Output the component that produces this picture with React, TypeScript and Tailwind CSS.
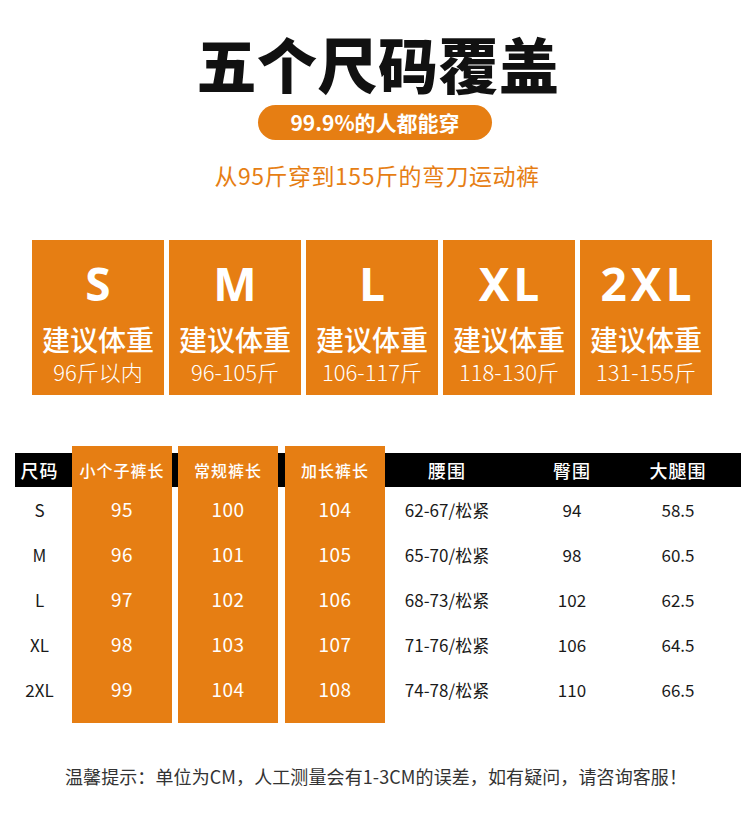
import React from "react";

const FONT = { fontFamily: '"Noto Sans CJK SC", "Noto Sans", sans-serif' };

const cards = [
  { s: "S", w: "96斤以内" },
  { s: "M", w: "96-105斤" },
  { s: "L", w: "106-117斤" },
  { s: "XL", w: "118-130斤" },
  { s: "2XL", w: "131-155斤" },
];

const sizes = ["S", "M", "L", "XL", "2XL"];
const short = ["95", "96", "97", "98", "99"];
const regular = ["100", "101", "102", "103", "104"];
const long = ["104", "105", "106", "107", "108"];
const waist = ["62-67/松紧", "65-70/松紧", "68-73/松紧", "71-76/松紧", "74-78/松紧"];
const hip = ["94", "98", "102", "106", "110"];
const thigh = ["58.5", "60.5", "62.5", "64.5", "66.5"];

function OrangeCol({ title, values }: { title: string; values: string[] }) {
  return (
    <div className="w-[100px] bg-[#e67e13] pt-[7px] pb-[11px] flex flex-col">
      <div className="h-[34px] flex items-center justify-center text-white text-[16px] font-medium tracking-[1px]">
        {title}
      </div>
      {values.map((v, i) => (
        <div key={i} className="h-[45px] flex items-center justify-center text-white text-[19px] font-normal tracking-[0.5px]">
          {v}
        </div>
      ))}
    </div>
  );
}

function Spacer({ w }: { w: string }) {
  return (
    <div className={`${w} flex flex-col pt-[7px]`}>
      <div className="h-[34px] bg-black" />
    </div>
  );
}

function PlainCol({
  title,
  values,
  cls,
  inner,
}: {
  title: string;
  values: string[];
  cls: string;
  inner?: string;
}) {
  return (
    <div className={`${cls} flex flex-col pt-[7px]`}>
      <div className={`h-[34px] bg-black flex items-center justify-center text-white text-[18px] font-medium tracking-[1px] ${inner ?? ""}`}>
        {title}
      </div>
      {values.map((v, i) => (
        <div key={i} className={`h-[45px] flex items-center justify-center text-[#1a1a1a] text-[17px] ${inner ?? ""}`}>
          {v}
        </div>
      ))}
    </div>
  );
}

export default function App() {
  return (
    <div className="w-[750px] h-[837px] bg-white overflow-hidden" style={FONT}>
      <div className="flex flex-col items-center pt-[33px]">
        <div className="text-[60px] leading-[60px] font-black text-[#111] tracking-[0.5px] pl-[6px]">五个尺码覆盖</div>
        <div className="mt-[12px] w-[234px] h-[35px] rounded-full bg-[#e67e13] flex items-center justify-center text-white text-[21px] font-bold">
          99.9%的人都能穿
        </div>
        <div className="mt-[20px] text-[23px] leading-[30px] text-[#e67e13] tracking-[0.5px] pl-[4px]">
          从95斤穿到155斤的弯刀运动裤
        </div>
      </div>

      <div className="mt-[50px] flex gap-[5px] pl-[32px]">
        {cards.map((c) => (
          <div key={c.s} className="w-[132px] h-[155px] bg-[#e67e13] flex flex-col items-center pt-[20px] text-white">
            <div className="text-[46px] leading-[46px] font-bold tracking-[4px] pl-[4px]" style={{ fontFamily: '"Noto Sans", "Open Sans", sans-serif' }}>
              {c.s}
            </div>
            <div className="mt-[19px] text-[28px] leading-[28px] font-medium">建议体重</div>
            <div className="mt-[7px] text-[22px] leading-[22px] font-light">{c.w}</div>
          </div>
        ))}
      </div>

      <div className="mt-[51px] flex pl-[15px]">
        <PlainCol title="尺码" values={sizes} cls="w-[57px]" inner="pr-[8px] text-[17px]" />
        <OrangeCol title="小个子裤长" values={short} />
        <Spacer w="w-[6px]" />
        <OrangeCol title="常规裤长" values={regular} />
        <Spacer w="w-[7px]" />
        <OrangeCol title="加长裤长" values={long} />
        <PlainCol title="腰围" values={waist} cls="w-[124px]" />
        <PlainCol title="臀围" values={hip} cls="w-[126px]" />
        <PlainCol title="大腿围" values={thigh} cls="w-[106px]" inner="pr-[20px]" />
      </div>

      <div className="mt-[40px] text-center text-[18px] text-[#333] tracking-[0.1px] pl-[2px]">
        温馨提示：单位为CM，人工测量会有1-3CM的误差，如有疑问，请咨询客服！
      </div>
    </div>
  );
}
